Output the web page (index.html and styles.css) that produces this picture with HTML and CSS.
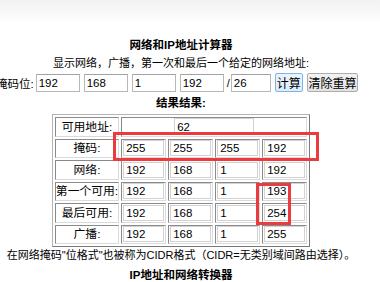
FILE: index.html
```html
<!DOCTYPE html>
<html lang="zh-CN">
<head>
    <meta charset="UTF-8">
    <title>网络和IP地址计算器</title>
    <link rel="stylesheet" href="styles.css">
</head>
<body>
    <div class="page">
        <h2 class="title">网络和IP地址计算器</h2>
        <p class="intro">显示网络，广播，第一次和最后一个给定的网络地址:</p>
        <div class="mask-row">
            <span class="mask-label">子网掩码位:</span>
            <input type="text" class="octet" value="192">
            <input type="text" class="octet" value="168">
            <input type="text" class="octet" value="1">
            <input type="text" class="octet" value="192">
            <span class="slash">/</span>
            <input type="text" class="bits" value="26">
            <button class="btn btn-calc">计算</button>
            <button class="btn btn-reset">清除重算</button>
        </div>
        <h3 class="result-title">结果结果:</h3>
        <table class="result">
            <tr>
                <td class="label">可用地址:</td>
                <td colspan="4" class="count"><input type="text" class="count-input" value="62"></td>
            </tr>
            <tr>
                <td class="label">掩码:</td>
                <td><input type="text" class="cell-input" value="255"></td>
                <td><input type="text" class="cell-input" value="255"></td>
                <td><input type="text" class="cell-input" value="255"></td>
                <td><input type="text" class="cell-input" value="192"></td>
            </tr>
            <tr>
                <td class="label">网络:</td>
                <td><input type="text" class="cell-input" value="192"></td>
                <td><input type="text" class="cell-input" value="168"></td>
                <td><input type="text" class="cell-input" value="1"></td>
                <td><input type="text" class="cell-input" value="192"></td>
            </tr>
            <tr>
                <td class="label">第一个可用:</td>
                <td><input type="text" class="cell-input" value="192"></td>
                <td><input type="text" class="cell-input" value="168"></td>
                <td><input type="text" class="cell-input" value="1"></td>
                <td><input type="text" class="cell-input" value="193"></td>
            </tr>
            <tr>
                <td class="label">最后可用:</td>
                <td><input type="text" class="cell-input" value="192"></td>
                <td><input type="text" class="cell-input" value="168"></td>
                <td><input type="text" class="cell-input" value="1"></td>
                <td><input type="text" class="cell-input" value="254"></td>
            </tr>
            <tr>
                <td class="label">广播:</td>
                <td><input type="text" class="cell-input" value="192"></td>
                <td><input type="text" class="cell-input" value="168"></td>
                <td><input type="text" class="cell-input" value="1"></td>
                <td><input type="text" class="cell-input" value="255"></td>
            </tr>
        </table>
        <p class="note">在网络掩码"位格式"也被称为CIDR格式（CIDR=无类别域间路由选择）。</p>
        <h2 class="title title-next">IP地址和网络转换器</h2>

        <!-- annotation boxes drawn over the screenshot -->
        <div class="mark mark-mask"></div>
        <div class="mark mark-range"></div>
    </div>
</body>
</html>
```

FILE: styles.css
```css
body {
    margin: 0;
    overflow: hidden;
    background: linear-gradient(#f2f2f2, #ffffff 24px);
    font-family: "Liberation Sans", "Noto Sans CJK SC", sans-serif;
    font-size: 11px;
    color: #000000;
}
.page {
    position: relative;
    width: 362px;
    padding-top: 36px;
    text-align: center;
}
.title {
    margin: 0;
    font-size: 11.5px;
    line-height: 18px;
    font-weight: bold;
}
.title-next {
    margin-top: 3px;
}
.intro {
    margin: 0;
    line-height: 18px;
}
.mask-row {
    display: flex;
    align-items: center;
    height: 19px;
    margin: 1px 0 0 -27px;
    white-space: nowrap;
}
.mask-label {
    margin-right: 2px;
    font-size: 11.5px;
}
input {
    box-sizing: border-box;
    font-family: "Liberation Sans", sans-serif;
    font-size: 11.5px;
    color: #000000;
    background: #ffffff;
    border: 1px solid #b8b8b8;
    border-top-color: #a2a2a2;
    padding: 0 2px;
    margin: 0;
}
.octet {
    width: 44px;
    height: 18px;
    margin-right: 4px;
}
.slash {
    margin: 0 1px 0 -1px;
}
.bits {
    width: 40px;
    height: 18px;
    margin-right: 4px;
}
.btn {
    box-sizing: border-box;
    height: 19px;
    padding: 0;
    margin: 0 4px 0 0;
    font-family: "Noto Sans CJK SC", sans-serif;
    font-size: 12px;
    line-height: 17px;
    color: #000000;
    background: linear-gradient(#f2f2f2, #e2e2e2);
    border: 1px solid #acacac;
    border-radius: 2px;
}
.btn-calc {
    width: 36px;
    background: linear-gradient(#eaf4fc, #dcecfc);
    border-color: #7eb4ea;
}
.btn-reset {
    width: 66px;
}
.result-title {
    margin: 2px 0 0;
    font-size: 11.5px;
    line-height: 18px;
    font-weight: bold;
}
.result {
    margin: 2px auto 0;
    border: 1px solid;
    border-color: #b4b4b4 #7a7a7a #7a7a7a #b4b4b4;
    border-spacing: 2px;
}
.result td {
    height: 19.5px;
    box-sizing: border-box;
    padding: 0 1px;
    border: 1px solid;
    border-color: #8a8a8a #dadada #dadada #8a8a8a;
    width: 45px;
}
.result td.label {
    width: 64px;
    padding: 0;
    font-size: 11.8px;
    line-height: 16px;
    white-space: nowrap;
    text-align: center;
}
.result td.count {
    text-align: center;
}
.cell-input {
    width: 100%;
    height: 16px;
    border-color: #d2d2d2;
}
.count-input {
    width: 80px;
    height: 17px;
    border-color: #d2d2d2;
}
.note {
    margin: 0 -20px;
    line-height: 16px;
    white-space: nowrap;
}
.mark {
    position: absolute;
    border: 3px solid #ec3b3f;
}
.mark-mask {
    left: 113px;
    top: 132px;
    width: 200px;
    height: 23px;
}
.mark-range {
    left: 256px;
    top: 183px;
    width: 29px;
    height: 36px;
}
```
